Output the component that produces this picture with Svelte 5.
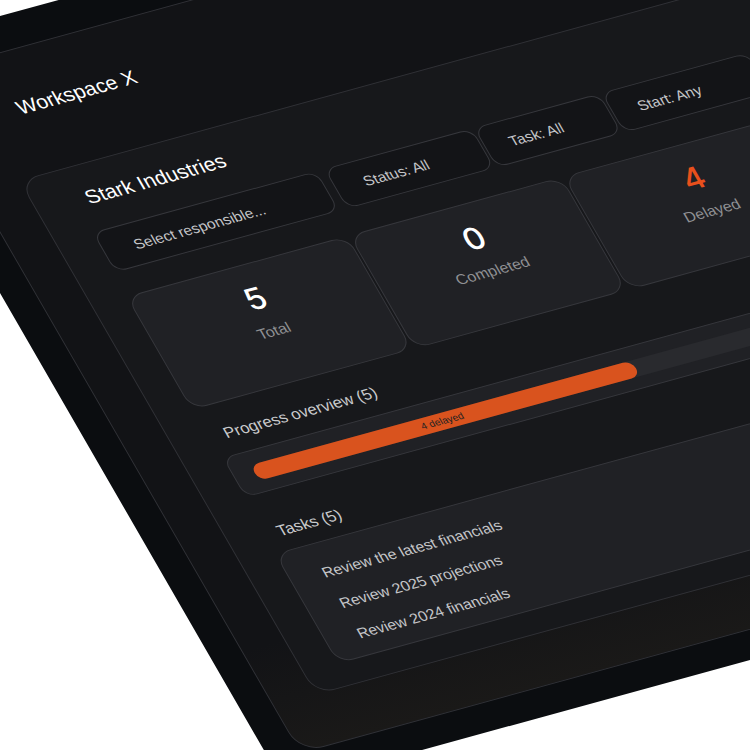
<script>
	const filters = [
		{ label: "Select responsible...", width: 232 },
		{ label: "Status: All", width: 153 },
		{ label: "Task: All", width: 130 },
		{ label: "Start: Any", width: 152 }
	];
	const stats = [
		{ value: 5, label: "Total" },
		{ value: 0, label: "Completed" },
		{ value: 4, label: "Delayed", late: true }
	];
	const tasks = ["Review the latest financials", "Review 2025 projections", "Review 2024 financials"];
</script>

<div class="stage">
	<div class="frame">
		<div class="panel">
			<div class="head">Workspace X</div>
			<div class="card">
				<h2>Stark Industries</h2>
				<div class="filters">
					{#each filters as f}
						<div class="filter" style:width="{f.width}px">{f.label}</div>
					{/each}
				</div>
				<div class="stats">
					{#each stats as s}
						<div class="stat">
							<span class="value" class:late={s.late}>{s.value}</span>
							<span class="label">{s.label}</span>
						</div>
					{/each}
				</div>
				<h3 class="progress-title">Progress overview (5)</h3>
				<div class="track">
					<div class="rail">
						<div class="bar">4 delayed</div>
					</div>
				</div>
				<h3 class="tasks-title">Tasks (5)</h3>
				<div class="tasks">
					{#each tasks as t}
						<div class="task">{t}</div>
					{/each}
				</div>
			</div>
		</div>
	</div>
</div>

<style>
	:global(body) {
		margin: 0;
		background: #fff;
		overflow: hidden;
	}
	.stage {
		position: relative;
		width: 750px;
		height: 750px;
		overflow: hidden;
		font-family: "Liberation Sans", Arial, sans-serif;
	}
	/* whole app is tilted, so everything inside is laid out flat */
	.frame {
		position: absolute;
		top: 0;
		left: 0;
		box-sizing: border-box;
		width: 1000px;
		height: 847px;
		padding: 36px 31px 30px;
		background: #0b0d10;
		border-radius: 32px;
		transform-origin: 0 0;
		transform: matrix(0.965, -0.265, 0.5, 0.866, -138, 54);
	}
	.panel {
		box-sizing: border-box;
		height: 100%;
		padding: 0 43px;
		background: linear-gradient(180deg, #121316 85%, #1a1918);
		border: 1px solid #303136;
		border-radius: 24px;
	}
	.head {
		height: 132px;
		box-sizing: border-box;
		padding: 48px 0 0 36px;
		font-size: 20.6px;
		line-height: 24px;
		color: #fff;
	}
	.card {
		box-sizing: border-box;
		height: 594px;
		padding: 23px 46px 0 38px;
		background: #17181b;
		border: 1px solid #303136;
		border-radius: 20px;
	}
	h2 {
		margin: 0 0 24px 12px;
		font-size: 20.7px;
		font-weight: 400;
		line-height: 24px;
		color: #fff;
	}
	.filters {
		display: flex;
		gap: 2px;
		height: 46px;
	}
	.filter {
		display: flex;
		align-items: center;
		flex: none;
		box-sizing: border-box;
		padding-left: 28px;
		border: 1px solid #36373c;
		border-radius: 12px;
		background: #131417;
		font-size: 15px;
		color: #c4c5c8;
	}
	.filter:first-child {
		margin-right: 6px;
		padding-left: 30px;
	}
	.filter:nth-child(3) {
		padding-left: 24px;
	}
	.filter:nth-child(4) {
		padding-left: 25px;
	}
	.stats {
		display: grid;
		grid-template-columns: 229px 220px 231px;
		gap: 2px;
		margin: 27px 0 0 -3px;
	}
	.stat {
		display: flex;
		flex-direction: column;
		align-items: center;
		box-sizing: border-box;
		height: 131px;
		padding-top: 18px;
		background: #202125;
		border: 1px solid #36373c;
		border-radius: 16px;
	}
	.value {
		font-family: Inter, "Liberation Sans", sans-serif;
		font-size: 32px;
		font-weight: 500;
		line-height: 38px;
		color: #fff;
	}
	.value.late {
		color: #e8501c;
	}
	.label {
		margin-top: 8px;
		font-size: 15.5px;
		line-height: 20px;
		color: #8f9093;
	}
	h3 {
		margin: 0;
		font-size: 16.2px;
		font-weight: 400;
		line-height: 20px;
		color: #c9cacc;
	}
	.progress-title {
		margin: 22px 0 14px 14px;
	}
	.track {
		box-sizing: border-box;
		height: 46px;
		padding: 14px 20px;
		background: #202125;
		border: 1px solid #36373c;
		border-radius: 12px;
	}
	.rail {
		height: 18px;
		background: #292a2e;
		border-radius: 9px;
	}
	.bar {
		box-sizing: border-box;
		width: 395px;
		height: 18px;
		padding-right: 6px;
		background: #d9531e;
		border-radius: 9px;
		font-size: 10px;
		line-height: 18px;
		text-align: center;
		color: #222;
	}
	.tasks-title {
		margin: 32px 0 12px 11px;
	}
	.tasks {
		box-sizing: border-box;
		height: 127px;
		margin-left: -3px;
		padding: 14px 32px 0;
		background: #202125;
		border: 1px solid #36373c;
		border-radius: 16px;
	}
	.task {
		font-size: 15.3px;
		line-height: 35px;
		color: #c4c5c8;
	}
</style>
